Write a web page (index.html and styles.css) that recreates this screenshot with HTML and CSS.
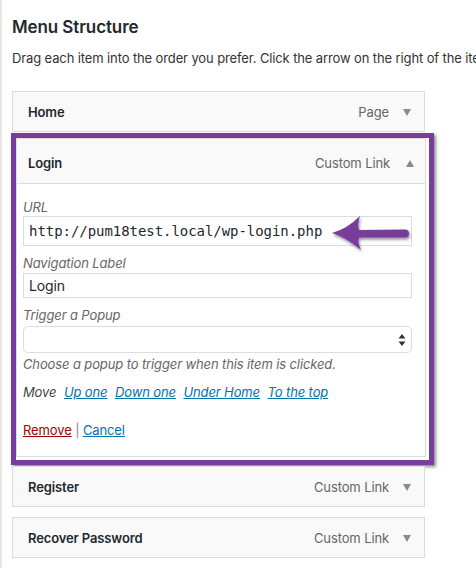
FILE: index.html
```html
<!DOCTYPE html>
<html lang="en">
<head>
    <meta charset="UTF-8">
    <meta name="viewport" content="width=device-width, initial-scale=1.0">
    <title>Menu Structure</title>
    <link rel="stylesheet" href="styles.css">
</head>
<body>
    <div class="page">
        <h3 class="title">Menu Structure</h3>
        <p class="intro">Drag each item into the order you prefer. Click the arrow on the right of the item to reveal additional configuration options.</p>

        <ul class="menu">
            <li class="item">
                <div class="bar">
                    <span class="item-title">Home</span>
                    <span class="item-type">Page</span>
                    <span class="toggle"></span>
                </div>
            </li>

            <li class="highlight">
                <div class="item open">
                    <div class="bar">
                        <span class="item-title">Login</span>
                        <span class="item-type">Custom Link</span>
                        <span class="toggle up"></span>
                    </div>
                    <div class="settings">
                        <div class="field">
                            <label class="label">URL</label>
                            <div class="input url">http://pum18test.local/wp-login.php</div>
                            <!-- annotation arrow -->
                            <svg class="pointer" width="84" height="40" viewBox="0 0 84 40">
                                <defs>
                                    <filter id="shadow" x="-20%" y="-30%" width="140%" height="170%">
                                        <feDropShadow dx="1" dy="2" stdDeviation="1.4" flood-color="#000" flood-opacity="0.45"/>
                                    </filter>
                                </defs>
                                <path filter="url(#shadow)" fill="#783c9a" d="M2,19 Q17,15 30,2 Q27,11 29,16 L75,15.5 A4,4 0 0 1 75,23.5 L29,23.5 Q27,28 31,36 Q17,24 2,19 Z"/>
                            </svg>
                        </div>
                        <div class="field">
                            <label class="label">Navigation Label</label>
                            <div class="input">Login</div>
                        </div>
                        <div class="field">
                            <label class="label">Trigger a Popup</label>
                            <div class="select">
                                <svg width="8" height="14" viewBox="0 0 8 14">
                                    <path d="M4,1 L7.5,5.5 L0.5,5.5 Z M4,13 L7.5,8.5 L0.5,8.5 Z" fill="#333"/>
                                </svg>
                            </div>
                            <p class="hint">Choose a popup to trigger when this item is clicked.</p>
                        </div>
                        <p class="move">Move <a href="#">Up one</a> <a href="#">Down one</a> <a href="#">Under Home</a> <a href="#">To the top</a></p>
                        <p class="actions"><a href="#" class="remove">Remove</a> <span class="sep">|</span> <a href="#">Cancel</a></p>
                    </div>
                </div>
            </li>

            <li class="item">
                <div class="bar">
                    <span class="item-title">Register</span>
                    <span class="item-type">Custom Link</span>
                    <span class="toggle"></span>
                </div>
            </li>

            <li class="item">
                <div class="bar">
                    <span class="item-title">Recover Password</span>
                    <span class="item-type">Custom Link</span>
                    <span class="toggle"></span>
                </div>
            </li>
        </ul>
    </div>
</body>
</html>
```

FILE: styles.css
```css
*{
    margin: 0;
    padding: 0;
    list-style: none;
    box-sizing: border-box;
}
body{
    background-color: #ffffff;
    font-family: Inter, "Liberation Sans", sans-serif;
    font-size: 13px;
    letter-spacing: -0.12px;
    color: #23282d;
    overflow: hidden;
}
.page{
    min-height: 568px;
    border-left: 2px solid #e6e6e6;
    padding: 15px 0 0 10px;
}
.title{
    font-size: 17px;
    line-height: 24px;
    font-weight: 600;
    letter-spacing: -0.1px;
}
.intro{
    margin: 10px 0 24px;
    line-height: 18px;
    white-space: nowrap;
    overflow: hidden;
    color: #333333;
}
.menu{
    width: 413px;
}
.item{
    background-color: #f9f9f9;
    border: 1px solid #dddddd;
}
.menu > .item + .item{
    margin-top: 10px;
}
.bar{
    display: flex;
    align-items: center;
    height: 39px;
    padding: 1px 13px 0 15px;
}
.item-title{
    flex: 1;
    font-weight: 600;
}
.item-type{
    color: #666666;
    margin-right: 14px;
}
.toggle{
    width: 0;
    height: 0;
    border-left: 4.5px solid transparent;
    border-right: 4.5px solid transparent;
    border-top: 7px solid #8a8a8a;
}
.toggle.up{
    border-top: 0;
    border-bottom: 7px solid #8a8a8a;
}

/* highlighted (opened) item */
.highlight{
    width: 423px;
    margin: 1px 0 1px -1px;
    border: 5px solid #783c9a;
    padding: 0 3px 3px 0;
    background-color: #ffffff;
    box-shadow: 2px 2px 3px rgba(0, 0, 0, 0.45);
}
.item.open{
    background-color: #ffffff;
}
.open .bar{
    height: 45px;
    padding: 4px 11px 0 11px;
    background-color: #f9f9f9;
    border-bottom: 1px solid #dddddd;
}
.open .item-type{
    margin-right: 16px;
}
.settings{
    padding: 14px 13px 17px 6px;
}
.field{
    position: relative;
}
.field + .field{
    margin-top: 8px;
}
.label{
    display: block;
    font-style: italic;
    line-height: 18px;
    color: #666666;
}
.input{
    height: 30px;
    border: 1px solid #dddddd;
    padding: 0 5px;
    font-size: 14px;
    line-height: 28px;
    color: #23282d;
    background-color: #ffffff;
}
.field + .field .input{
    height: 25px;
    line-height: 23px;
    margin-top: 1px;
}
.input.url{
    font-family: "DejaVu Sans Mono", "Liberation Mono", monospace;
    font-size: 14px;
    letter-spacing: -0.05px;
}
.pointer{
    position: absolute;
    left: 307px;
    top: 16px;
}
.select{
    display: flex;
    align-items: center;
    justify-content: flex-end;
    height: 27px;
    margin-top: 2px;
    padding-right: 5px;
    border: 1px solid #dddddd;
    border-radius: 5px;
    background-color: #ffffff;
}
.hint{
    margin-top: 2px;
    line-height: 18px;
    font-style: italic;
    color: #666666;
}
.move{
    margin-top: 10px;
    line-height: 18px;
    font-style: italic;
    color: #444444;
    word-spacing: 3px;
}
.move a{
    margin-left: 1px;
    word-spacing: 0;
}
a{
    color: #0073aa;
}
.actions{
    margin-top: 20px;
    line-height: 18px;
}
.actions .remove{
    color: #a00000;
}
.sep{
    color: #888888;
}
```
